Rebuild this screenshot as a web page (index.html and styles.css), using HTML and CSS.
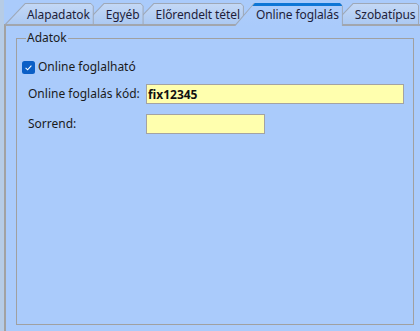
FILE: index.html
```html
<!DOCTYPE html>
<html lang="hu">
<head>
<meta charset="utf-8">
<title>Online foglalás</title>
<link rel="stylesheet" href="styles.css">
</head>
<body>
<div class="window">
    <div class="tabcontrol">
        <div class="tabstrip">
            <div class="tab">Alapadatok</div>
            <div class="tab">Egyéb</div>
            <div class="tab">Előrendelt tétel</div>
            <div class="tab active">Online foglalás</div>
            <div class="tab">Szobatípus</div>
        </div>
        <div class="tabpage">
            <fieldset class="group">
                <legend>Adatok</legend>
                <div class="row check-row">
                    <span class="checkbox">
                        <svg width="13" height="13" viewBox="0 0 13 13">
                            <rect x="0" y="0" width="13" height="13" rx="2.5" fill="#0b5fc6"/>
                            <polyline points="3.6,6.9 5.6,8.8 9.4,4.6" fill="none" stroke="#ffffff" stroke-width="1.1"/>
                        </svg>
                    </span>
                    <span class="check-label">Online foglalható</span>
                </div>
                <div class="row field-row">
                    <label class="field-label" for="code">Online foglalás kód:</label>
                    <input class="field wide" id="code" type="text" value="fix12345">
                </div>
                <div class="row field-row order-row">
                    <label class="field-label" for="order">Sorrend:</label>
                    <input class="field short" id="order" type="text" value="">
                </div>
            </fieldset>
        </div>
    </div>
</div>
</body>
</html>
```
FILE: styles.css
```css
html, body {
    margin: 0;
    padding: 0;
    height: 100%;
}

body {
    font-family: "Noto Sans", "DejaVu Sans", sans-serif;
    font-size: 12px;
    line-height: 16px;
    color: #1b1b1b;
}

.window {
    display: flex;
    height: 100vh;
    padding-left: 4px;
    background: #b6cce6;
    box-sizing: border-box;
}

.tabcontrol {
    flex: 1;
    display: flex;
    flex-direction: column;
    background: #aacbfb;
    min-width: 0;
}

/* tab headers */
.tabstrip {
    display: flex;
    align-items: flex-end;
    height: 24px;
    padding-left: 1px;
    position: relative;
    z-index: 1;
}

.tab {
    position: relative;
    height: 21px;
    box-sizing: border-box;
    padding: 4px 4px 0 22px;
    margin-left: -10px;
    white-space: nowrap;
    letter-spacing: -0.1px;
    color: #1e1e3a;
}

.tab:first-child {
    margin-left: 0;
}

.tab::before,
.tab::after {
    content: "";
    position: absolute;
}

.tab::before {
    inset: 0;
    z-index: -2;
    background: #9ea8b7;
    clip-path: polygon(0 100%, 20px 0, calc(100% - 3px) 0, 100% 3px, 100% 100%);
}

.tab::after {
    inset: 1px 1px 0 1px;
    z-index: -1;
    background: linear-gradient(#c3d8f6, #acc9f2);
    clip-path: polygon(0.5px 100%, 19.5px 0, calc(100% - 2px) 0, 100% 2px, 100% 100%);
}

.tab:nth-child(1) { z-index: 5; }
.tab:nth-child(2) { z-index: 4; }
.tab:nth-child(3) { z-index: 3; }
.tab:nth-child(5) { z-index: 1; }

.tab.active {
    z-index: 10;
    height: 23px;
    margin-bottom: -2px;
    padding-top: 4px;
}

.tab.active::after {
    inset: 0 1px 0 1px;
    background: linear-gradient(#0e76d6 0, #0e76d6 3px, #aecdfb 3px, #aacbfb 100%);
    clip-path: polygon(0.5px 100%, 20px 0, calc(100% - 2px) 0, 100% 2px, 100% 100%);
}

/* page */
.tabpage {
    flex: 1;
    display: flex;
    flex-direction: column;
    border-top: 2px solid #a2a6ad;
    border-left: 2px solid #a2a2a2;
    min-height: 0;
}

.group {
    flex: 1;
    margin: 4px 6px 6px 10px;
    padding: 11px 0 0 5px;
    border: 1px solid #a0a0a0;
    min-width: 0;
}

.group legend {
    margin-left: 4px;
    padding: 0 1px;
    line-height: 16px;
}

.row {
    display: flex;
    align-items: center;
    height: 20px;
}

.checkbox {
    display: flex;
    width: 13px;
    height: 13px;
}

.check-label {
    margin-left: 3px;
}

.field-row {
    margin-top: 7px;
}

.order-row {
    margin-top: 10px;
}

.field-label {
    width: 118px;
    padding-left: 6px;
}

.field {
    box-sizing: border-box;
    height: 20px;
    margin: 0;
    padding: 0 1px;
    border: 1px solid #a3a3a3;
    background: #ffffae;
    font-family: "Noto Sans", "DejaVu Sans", sans-serif;
    font-size: 12px;
    font-weight: bold;
    color: #111111;
    outline: none;
}

.field.wide {
    width: 258px;
}

.field.short {
    width: 119px;
}
```
